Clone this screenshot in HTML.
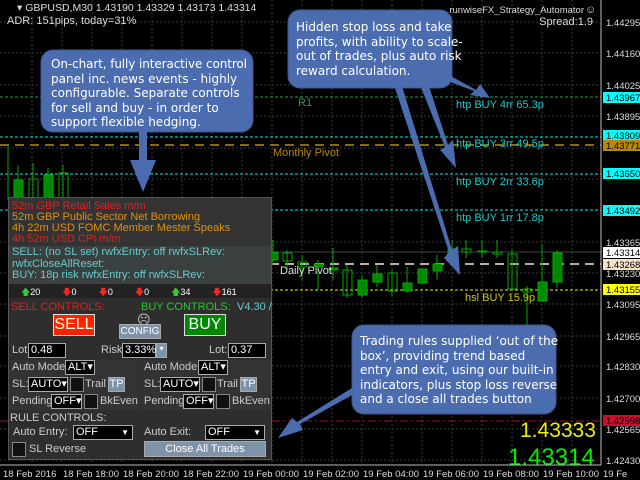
<!DOCTYPE html>
<html><head><style>
body{margin:0;width:640px;height:480px;background:#000;overflow:hidden;font-family:"Liberation Sans",sans-serif;position:relative}
svg{position:absolute;left:0;top:0}
.p{position:absolute;left:8px;top:197px;width:262px;height:261px;background:#2e2e2e;border:1px solid #555;font-size:11px;color:#ccc}
.a{position:absolute;white-space:nowrap}
.in{position:absolute;background:#000;border:1px solid #aaa;color:#fff;font-size:11px;height:13px;line-height:13px;padding-left:2px;box-sizing:content-box}
.cb{position:absolute;width:12px;height:13px;background:#111;border:1px solid #888}
.bt{position:absolute;background:#7f93a8;color:#fff;font-size:11px;text-align:center;border:1px solid #aaa}
</style></head><body>
<svg width="640" height="480" font-family="Liberation Sans, sans-serif">
<g stroke="#3a3a3a" stroke-dasharray="2,2">
<line x1="32" y1="0" x2="32" y2="464"/><line x1="62" y1="0" x2="62" y2="464"/><line x1="92" y1="0" x2="92" y2="464"/><line x1="122" y1="0" x2="122" y2="464"/><line x1="152" y1="0" x2="152" y2="464"/><line x1="182" y1="0" x2="182" y2="464"/><line x1="212" y1="0" x2="212" y2="464"/><line x1="242" y1="0" x2="242" y2="464"/><line x1="272" y1="0" x2="272" y2="464"/><line x1="302" y1="0" x2="302" y2="464"/><line x1="332" y1="0" x2="332" y2="464"/><line x1="362" y1="0" x2="362" y2="464"/><line x1="392" y1="0" x2="392" y2="464"/><line x1="422" y1="0" x2="422" y2="464"/><line x1="452" y1="0" x2="452" y2="464"/><line x1="482" y1="0" x2="482" y2="464"/><line x1="512" y1="0" x2="512" y2="464"/><line x1="542" y1="0" x2="542" y2="464"/><line x1="572" y1="0" x2="572" y2="464"/>
<line x1="0" y1="22" x2="600" y2="22"/><line x1="0" y1="53" x2="600" y2="53"/><line x1="0" y1="85" x2="600" y2="85"/><line x1="0" y1="116" x2="600" y2="116"/><line x1="0" y1="148" x2="600" y2="148"/><line x1="0" y1="179" x2="600" y2="179"/><line x1="0" y1="242" x2="600" y2="242"/><line x1="0" y1="273" x2="600" y2="273"/><line x1="0" y1="304" x2="600" y2="304"/><line x1="0" y1="336" x2="600" y2="336"/><line x1="0" y1="366" x2="600" y2="366"/><line x1="0" y1="398" x2="600" y2="398"/><line x1="0" y1="429" x2="600" y2="429"/><line x1="0" y1="460" x2="600" y2="460"/>
</g>
<line x1="0" y1="97" x2="601" y2="97" stroke="#2a9a50" stroke-dasharray="3,2"/>
<line x1="0" y1="137" x2="601" y2="137" stroke="#0ee" stroke-dasharray="3,2"/>
<line x1="0" y1="145" x2="601" y2="145" stroke="#8a6a10" stroke-width="2" stroke-dasharray="9,6"/>
<line x1="0" y1="174" x2="601" y2="174" stroke="#0ee" stroke-dasharray="3,2"/>
<line x1="0" y1="210" x2="601" y2="210" stroke="#0ee" stroke-dasharray="3,2"/>
<line x1="270" y1="252" x2="601" y2="252" stroke="#444"/>
<line x1="270" y1="264" x2="601" y2="264" stroke="#bbb0a0" stroke-width="2" stroke-dasharray="9,6"/>
<line x1="270" y1="290" x2="601" y2="290" stroke="#ee0" stroke-dasharray="3,2"/>
<line x1="0" y1="421" x2="601" y2="421" stroke="#a01030" stroke-dasharray="8,3,2,3"/>
<g stroke="#0a0" fill="#080">
<line x1="8" y1="145" x2="8" y2="200"/>
<line x1="18" y1="165" x2="18" y2="200"/><rect x="14" y="180" width="9" height="18"/>
<line x1="33" y1="163" x2="33" y2="200"/><rect x="29" y="179" width="9" height="20" fill="none"/>
<line x1="48" y1="168" x2="48" y2="200"/><rect x="44" y="175" width="9" height="22"/>
<line x1="63" y1="165" x2="63" y2="200"/><rect x="59" y="173" width="9" height="25" fill="none"/>
<line x1="273" y1="240" x2="273" y2="265"/><rect x="269" y="252" width="9" height="8"/>
<line x1="287" y1="250" x2="287" y2="270"/><rect x="283" y="253" width="9" height="8" fill="none"/>
<line x1="302" y1="255" x2="302" y2="280"/><rect x="298" y="262" width="9" height="5" fill="none"/>
<line x1="318" y1="260" x2="318" y2="290"/><rect x="314" y="264" width="9" height="3"/>
<line x1="333" y1="248" x2="333" y2="280"/><rect x="329" y="268" width="9" height="2"/>
<line x1="347" y1="265" x2="347" y2="298"/><rect x="343" y="270" width="9" height="25" fill="none"/>
<line x1="362" y1="275" x2="362" y2="298"/><rect x="358" y="280" width="9" height="15"/>
<line x1="377" y1="265" x2="377" y2="287"/><rect x="373" y="274" width="9" height="8"/>
<line x1="392" y1="270" x2="392" y2="296"/><rect x="388" y="273" width="9" height="18" fill="none"/>
<line x1="407" y1="267" x2="407" y2="293"/><rect x="403" y="283" width="9" height="8"/>
<line x1="422" y1="268" x2="422" y2="284"/><rect x="418" y="269" width="9" height="14"/>
<line x1="437" y1="255" x2="437" y2="280"/><rect x="433" y="264" width="9" height="7"/>
<line x1="452" y1="240" x2="452" y2="262"/><rect x="448" y="249" width="9" height="10"/>
<line x1="466" y1="240" x2="466" y2="258"/><rect x="462" y="249" width="9" height="3" fill="none"/>
<line x1="482" y1="240" x2="482" y2="258"/><rect x="478" y="251" width="9" height="1"/>
<line x1="497" y1="240" x2="497" y2="258"/><rect x="493" y="252" width="9" height="2" fill="none"/>
<line x1="512" y1="250" x2="512" y2="290"/><rect x="508" y="254" width="9" height="35" fill="none"/>
<line x1="527" y1="286" x2="527" y2="330"/><rect x="523" y="289" width="9" height="3" fill="none"/>
<line x1="542" y1="244" x2="542" y2="302"/><rect x="538" y="282" width="9" height="19"/>
<line x1="557" y1="250" x2="557" y2="288"/><rect x="553" y="253" width="9" height="29"/>
</g>
<g font-size="11">
<text x="298" y="106" fill="#2a9a50">R1</text>
<text x="273" y="156" fill="#b8860b">Monthly Pivot</text>
<text x="280" y="274" fill="#ddd">Daily Pivot</text>
<text x="456" y="108" fill="#1cc">htp BUY 4rr 65.3p</text>
<text x="456" y="147" fill="#1cc">htp BUY 3rr 49.5p</text>
<text x="456" y="185" fill="#1cc">htp BUY 2rr 33.6p</text>
<text x="456" y="221" fill="#1cc">htp BUY 1rr 17.8p</text>
<text x="465" y="301" fill="#cc0">hsl BUY 15.9p</text>
<text x="17" y="11" fill="#ddd" font-size="10.5">▾ GBPUSD,M30  1.43190 1.43329 1.43173 1.43314</text>
<text x="7" y="24" fill="#ddd">ADR: 151pips, today=31%</text>
<text x="584" y="13" fill="#ddd" text-anchor="end" font-size="9.5">runwiseFX_Strategy_Automator</text>
<text x="585" y="13" fill="#ddd" font-size="11">☺</text>
<text x="593" y="25" fill="#ddd" text-anchor="end">Spread:1.9</text>
</g>
<text x="520" y="437" fill="#ee0" font-size="21">1.43333</text>
<text x="508" y="465" fill="#0e0" font-size="24">1.43314</text>
<line x1="601" y1="0" x2="601" y2="465" stroke="#bbb"/>
<line x1="0" y1="465" x2="601" y2="465" stroke="#bbb"/>
<g font-size="9.5" fill="#ddd">
<text x="606" y="26">1.44295</text><text x="606" y="57">1.44160</text><text x="606" y="89">1.44025</text><text x="606" y="120">1.43895</text><text x="606" y="246">1.43365</text><text x="606" y="277">1.43230</text><text x="606" y="308">1.43095</text><text x="606" y="340">1.42965</text><text x="606" y="370">1.42830</text><text x="606" y="402">1.42700</text><text x="606" y="433">1.42565</text><text x="606" y="464">1.42430</text>
</g>
<g font-size="9.5">
<rect x="603" y="92" width="37" height="11" fill="#0ff"/><text x="606" y="101" fill="#000">1.43967</text>
<rect x="603" y="130" width="37" height="11" fill="#0ff"/><text x="606" y="139" fill="#000">1.43809</text>
<rect x="603" y="140" width="37" height="11" fill="#b8860b"/><text x="606" y="149" fill="#000">1.43771</text>
<rect x="603" y="168" width="37" height="11" fill="#0ff"/><text x="606" y="177" fill="#000">1.43650</text>
<rect x="603" y="205" width="37" height="11" fill="#0ff"/><text x="606" y="214" fill="#000">1.43492</text>
<rect x="603" y="247" width="37" height="11" fill="#fff"/><text x="606" y="256" fill="#000">1.43314</text>
<rect x="603" y="259" width="37" height="11" fill="#f5e0c8"/><text x="606" y="268" fill="#000">1.43268</text>
<rect x="603" y="284" width="37" height="11" fill="#ff0"/><text x="606" y="293" fill="#000">1.43155</text>
<rect x="603" y="415" width="37" height="11" fill="#c8102e"/><text x="606" y="424" fill="#000">1.42598</text>
</g>
<g font-size="9.5" fill="#ddd">
<text x="3" y="477">18 Feb 2016</text><text x="63" y="477">18 Feb 18:00</text><text x="123" y="477">18 Feb 20:00</text><text x="183" y="477">18 Feb 22:00</text><text x="243" y="477">19 Feb 00:00</text><text x="303" y="477">19 Feb 02:00</text><text x="363" y="477">19 Feb 04:00</text><text x="423" y="477">19 Feb 06:00</text><text x="483" y="477">19 Feb 08:00</text><text x="543" y="477">19 Feb 10:00</text><text x="603" y="477">19 Fe</text>
</g>
</svg>
<div class="p">
<div style="position:absolute;left:0;top:0;width:262px;height:48px;background:#333"></div>
<div class="a" style="left:3px;top:2px;color:#e02020">52m GBP Retail Sales m/m</div>
<div class="a" style="left:3px;top:13px;color:#e09010">52m GBP Public Sector Net Borrowing</div>
<div class="a" style="left:3px;top:24px;color:#e09010">4h 22m USD FOMC Member Mester Speaks</div>
<div class="a" style="left:3px;top:35px;color:#e02020">4h 52m USD CPI m/m</div>
<div style="position:absolute;left:0;top:48px;width:262px;height:38px;background:#3a3f3f"></div>
<div class="a" style="left:3px;top:48px;color:#6cc">SELL: (no SL set)  rwfxEntry: off rwfxSLRev:</div>
<div class="a" style="left:3px;top:60px;color:#6cc">rwfxCloseAllReset:</div>
<div class="a" style="left:3px;top:71px;color:#6cc">BUY: 18p risk  rwfxEntry: off rwfxSLRev:</div>
<div style="position:absolute;left:0;top:86px;width:262px;height:14px;background:#222"></div>
<div class="a" style="left:12px;top:87px;color:#fff;font-size:9px"><span style="color:#3c3">🡅</span>20<span style="margin-left:22px;color:#f22">🡇</span>0<span style="margin-left:22px;color:#f22">🡇</span>0<span style="margin-left:22px;color:#f22">🡇</span>0<span style="margin-left:22px;color:#3c3">🡅</span>34<span style="margin-left:22px;color:#f22">🡇</span>161</div>
<div class="a" style="left:2px;top:103px;color:#e02020">SELL CONTROLS:</div>
<div class="a" style="left:132px;top:103px;color:#2c2">BUY CONTROLS:</div>
<div class="a" style="left:228px;top:103px;color:#6cc">V4.30 /</div>
<div class="a" style="left:44px;top:116px;width:40px;height:20px;background:#f20;border:1px solid #ddd;color:#ffd;font-size:16px;text-align:center;line-height:20px">SELL</div>
<div class="a" style="left:175px;top:116px;width:40px;height:20px;background:#080;border:1px solid #ddd;color:#fff;font-size:16px;text-align:center;line-height:20px">BUY</div>
<div class="a" style="left:128px;top:114px;color:#ccc;font-size:13px">☹</div>
<div class="bt" style="left:110px;top:126px;width:40px;height:13px;line-height:13px;font-size:10px">CONFIG</div>
<div class="a" style="left:3px;top:146px">Lot:</div><div class="in" style="left:19px;top:145px;width:34px">0.48</div>
<div class="a" style="left:92px;top:146px">Risk:</div><div class="in" style="left:113px;top:145px;width:30px">3.33%</div><div class="bt" style="left:147px;top:145px;width:9px;height:13px;font-size:8px">▾</div>
<div class="a" style="left:200px;top:146px">Lot:</div><div class="in" style="left:219px;top:145px;width:34px">0.37</div>
<div style="position:absolute;left:0;top:162px;width:131px;height:50px;background:#333"></div>
<div style="position:absolute;left:132px;top:162px;width:130px;height:50px;background:#333"></div>
<div class="a" style="left:3px;top:163px">Auto Mode:</div><div class="in" style="left:56px;top:162px;width:26px">ALT▾</div>
<div class="a" style="left:135px;top:163px">Auto Mode:</div><div class="in" style="left:189px;top:162px;width:26px">ALT▾</div>
<div class="a" style="left:3px;top:180px">SL:</div><div class="in" style="left:19px;top:179px;width:36px">AUTO▾</div><div class="cb" style="left:61px;top:179px"></div><div class="a" style="left:76px;top:180px">Trail</div><div class="bt" style="left:99px;top:179px;width:15px;height:13px">TP</div>
<div class="a" style="left:135px;top:180px">SL:</div><div class="in" style="left:151px;top:179px;width:36px">AUTO▾</div><div class="cb" style="left:193px;top:179px"></div><div class="a" style="left:208px;top:180px">Trail</div><div class="bt" style="left:231px;top:179px;width:15px;height:13px">TP</div>
<div class="a" style="left:3px;top:197px">Pending:</div><div class="in" style="left:42px;top:196px;width:27px">OFF▾</div><div class="cb" style="left:75px;top:196px"></div><div class="a" style="left:91px;top:197px">BkEven</div>
<div class="a" style="left:135px;top:197px">Pending:</div><div class="in" style="left:174px;top:196px;width:27px">OFF▾</div><div class="cb" style="left:207px;top:196px"></div><div class="a" style="left:223px;top:197px">BkEven</div>
<div class="a" style="left:1px;top:214px;color:#ccc">RULE CONTROLS:</div>
<div class="a" style="left:4px;top:228px">Auto Entry:</div><div class="in" style="left:64px;top:227px;width:56px">OFF<span style="float:right;font-size:8px;padding-right:3px">▼</span></div>
<div class="a" style="left:135px;top:228px">Auto Exit:</div><div class="in" style="left:196px;top:227px;width:56px">OFF<span style="float:right;font-size:8px;padding-right:3px">▼</span></div>
<div class="cb" style="left:3px;top:244px"></div><div class="a" style="left:20px;top:245px">SL Reverse</div>
<div class="bt" style="left:135px;top:243px;width:120px;height:14px;line-height:14px">Close All Trades</div>
</div>
<svg width="640" height="480" style="pointer-events:none">
<g fill="#4c6cb0" stroke="#3a5590">
<rect x="41" y="50" width="212" height="82" rx="12"/>
<rect x="288" y="10" width="164" height="78" rx="12"/>
<rect x="352" y="325" width="204" height="89" rx="12"/>
</g>
<g fill="#4c6cb0">
<rect x="139" y="131" width="8" height="30"/><polygon points="130,160 156,160 143,192"/>
<polygon points="432,75 440,70 476,90 480,84 490,98 470,95 474,91"/>
<polygon points="420,85 428,83 448,145 453,140 456,168 440,150 445,147"/>
<polygon points="395,88 402,86 452,250 458,246 460,275 444,258 449,252"/>
<polygon points="352,388 354,394 300,424 303,430 278,438 292,418 297,422"/>
</g>
<g font-size="12" fill="#fff" font-family="DejaVu Sans, sans-serif">
<text x="51" y="68" textLength="196">On-chart, fully interactive control</text>
<text x="51" y="83">panel inc. news events - highly</text>
<text x="51" y="97">configurable. Separate controls</text>
<text x="51" y="112">for sell and buy - in order to</text>
<text x="51" y="126">support flexible hedging.</text>
<text x="296" y="31">Hidden stop loss and take</text>
<text x="296" y="46">profits, with ability to scale-</text>
<text x="296" y="60">out of trades, plus auto risk</text>
<text x="296" y="75">reward calculation.</text>
<text x="360" y="345">Trading rules supplied ‘out of the</text>
<text x="360" y="360">box’, providing trend based</text>
<text x="360" y="374">entry and exit, using our built-in</text>
<text x="360" y="389">indicators, plus stop loss reverse</text>
<text x="360" y="403">and a close all trades button</text>
</g>
</svg>
</body></html>
